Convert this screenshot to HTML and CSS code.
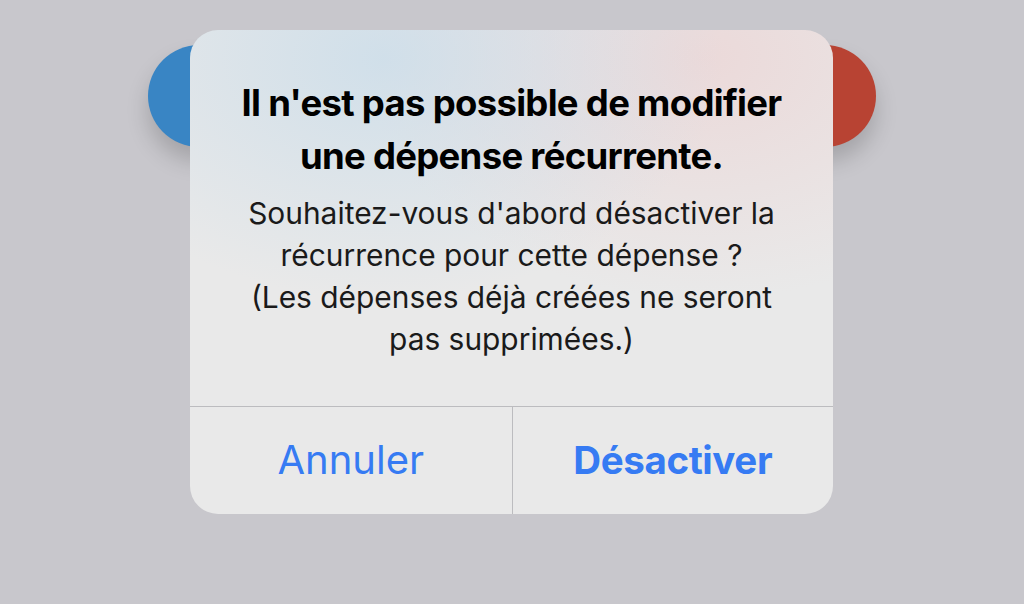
FILE: index.html
```html
<!DOCTYPE html>
<html lang="fr">
<head>
<meta charset="utf-8">
<title>Alerte</title>
<link rel="stylesheet" href="styles.css">
</head>
<body>
<div class="stage">
  <div class="blob blob-blue"></div>
  <div class="blob blob-red"></div>
  <div class="alert">
    <div class="alert-body">
      <h1 class="alert-title">Il n'est pas possible de modifier<br>une dépense récurrente.</h1>
      <p class="alert-message">Souhaitez-vous d'abord désactiver la<br>récurrence pour cette dépense ?<br>(Les dépenses déjà créées ne seront<br>pas supprimées.)</p>
    </div>
    <div class="alert-actions">
      <button class="action">Annuler</button>
      <button class="action action-primary">Désactiver</button>
    </div>
  </div>
</div>
</body>
</html>
```
FILE: styles.css
```css
html, body {
  margin: 0;
  padding: 0;
  height: 100%;
  background: #c8c7cc;
  font-family: Inter, "Noto Sans", "Liberation Sans", sans-serif;
}
.stage {
  position: relative;
  height: 604px;
  display: flex;
  justify-content: center;
  align-items: flex-start;
}
.blob {
  position: absolute;
  top: 45px;
  width: 102px;
  height: 102px;
  border-radius: 50%;
  box-shadow: 0 14px 22px rgba(0,0,0,0.18);
}
.blob-blue { left: 148px; background: #3985c4; }
.blob-red { left: 774px; background: #b84333; }
.alert {
  position: relative;
  margin-top: 30px;
  margin-left: -1px;
  width: 643px;
  height: 484px;
  border-radius: 28px;
  overflow: hidden;
  background:
    radial-gradient(ellipse 340px 240px at 30% 6%, rgba(200,220,234,0.75), rgba(200,220,234,0) 100%),
    radial-gradient(ellipse 340px 240px at 80% 6%, rgba(236,212,212,0.75), rgba(236,212,212,0) 100%),
    #e9e9e9;
  display: flex;
  flex-direction: column;
}
.alert-body {
  flex: 1;
  padding: 47px 10px 0;
  text-align: center;
  color: #000;
}
.alert-title {
  margin: 0;
  font-size: 36.5px;
  line-height: 53px;
  font-weight: 700;
  letter-spacing: -0.7px;
}
.alert-message {
  margin: 9px 0 0;
  font-size: 29.9px;
  line-height: 42px;
  font-weight: 400;
  color: #1a1a1a;
}
.alert-actions {
  height: 107px;
  border-top: 1px solid #bcbcbf;
  display: grid;
  grid-template-columns: 1fr 1fr;
}
.action {
  border: 0;
  background: transparent;
  font-family: inherit;
  font-size: 40px;
  color: #367bf3;
  padding: 0 0 2px;
  cursor: pointer;
}
.action + .action {
  border-left: 1px solid #bcbcbf;
}
.action-primary {
  font-size: 38.5px;
  font-weight: 700;
  letter-spacing: -0.4px;
}
```
